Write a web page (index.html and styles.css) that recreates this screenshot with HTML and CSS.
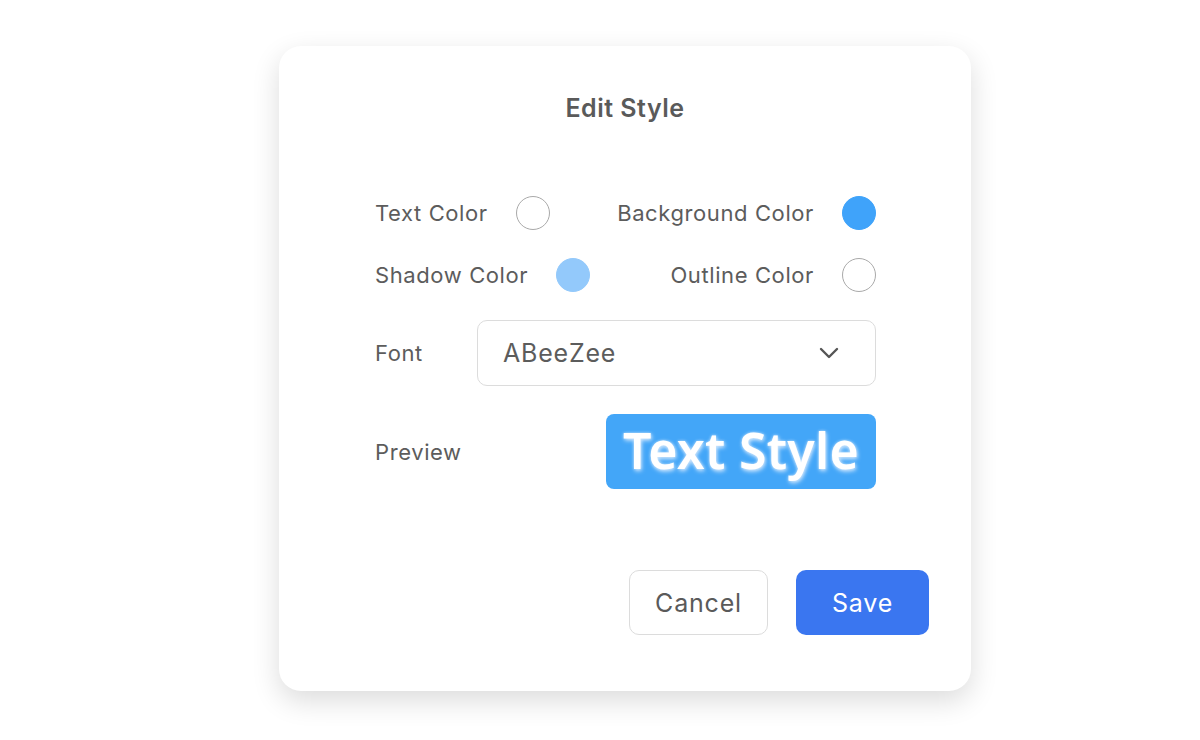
FILE: index.html
```html
<!DOCTYPE html>
<html lang="en">
<head>
    <meta charset="UTF-8">
    <meta name="viewport" content="width=device-width, initial-scale=1.0">
    <title>Edit Style</title>
    <link rel="stylesheet" href="styles.css">
</head>
<body>
    <div class="card">
        <h2 class="title">Edit Style</h2>
        <div class="form">
            <div class="colors">
                <div class="pick left"><span>Text Color</span><span class="dot"></span></div>
                <div class="pick right"><span>Background Color</span><span class="dot bg"></span></div>
                <div class="pick left"><span>Shadow Color</span><span class="dot shadow"></span></div>
                <div class="pick right"><span>Outline Color</span><span class="dot"></span></div>
            </div>
            <div class="row">
                <span>Font</span>
                <div class="select">
                    <span>ABeeZee</span>
                    <svg width="20" height="12" viewBox="0 0 20 12"><path d="M2 2 L10 10 L18 2" fill="none" stroke="#555" stroke-width="2.4" stroke-linecap="round" stroke-linejoin="round"/></svg>
                </div>
            </div>
            <div class="row">
                <span>Preview</span>
                <div class="preview">Text Style</div>
            </div>
        </div>
        <div class="buttons">
            <button class="cancel">Cancel</button>
            <button class="save">Save</button>
        </div>
    </div>
</body>
</html>
```

FILE: styles.css
```css
html, body {margin: 0; min-height: 740px; background: #ffffff;}
body {font-family: Inter, "Noto Sans", sans-serif; color: #5c5c5c; padding-top: 46px; box-sizing: border-box;}
.card {width: 692px; height: 645px; box-sizing: border-box; margin: 0 0 0 279px; padding: 47px 42px 0 0; background: #fff; border-radius: 22px; box-shadow: 0 10px 28px rgba(0,0,0,0.14);}
.title {margin: 0; padding-left: 42px; text-align: center; font-size: 25px; letter-spacing: 0.5px; line-height: 30px; font-weight: 600; color: #5a5a5a;}
.form {margin: 73px 0 0 96px; width: 501px; display: flex; flex-direction: column; gap: 28px; font-size: 22px; letter-spacing: 0.6px; white-space: nowrap;}
.colors {display: grid; grid-template-columns: auto auto; justify-content: space-between; row-gap: 28px;}
.pick {display: flex; align-items: center; gap: 28px; height: 34px;}
.pick.right {justify-content: flex-end;}
.dot {width: 32px; height: 32px; border: 1.5px solid #a9a9a9; border-radius: 50%;}
.dot.bg {background: #3fa3fa; border-color: #3fa3fa;}
.dot.shadow {background: #93c9fb; border-color: #93c9fb;}
.row {display: flex; align-items: center; justify-content: space-between;}
.select {width: 399px; height: 66px; box-sizing: border-box; border: 1.5px solid #dcdcdc; border-radius: 10px; display: flex; align-items: center; justify-content: space-between; padding: 0 36px 0 25px; font-size: 25px; letter-spacing: 0.8px;}
.preview {width: 270px; height: 75px; box-sizing: border-box; padding-bottom: 4px; background: #43a6f8; border-radius: 8px; color: #fff; font-family: "Noto Sans", sans-serif; font-weight: 600; font-size: 50px; letter-spacing: 0.3px; display: flex; align-items: center; justify-content: center; text-shadow: 1px 2px 4px #cfe6fd, 0 0 3px #b8dcfc;}
.buttons {display: flex; justify-content: flex-end; gap: 28px; margin-top: 81px;}
button {font-family: Inter, "Noto Sans", sans-serif; font-size: 25px; letter-spacing: 0.8px; height: 65px; border-radius: 10px; cursor: pointer;}
.cancel {width: 139px; background: #fff; color: #5a5a5a; border: 1.5px solid #dcdcdc;}
.save {width: 133px; background: #3a76f0; color: #fff; border: 0;}
```
